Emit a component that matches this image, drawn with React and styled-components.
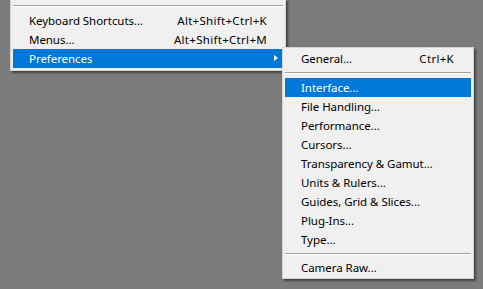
import React from 'react'
import styled, { createGlobalStyle } from 'styled-components'

const GlobalStyle = createGlobalStyle`
  html, body {
    margin: 0;
    padding: 0;
    background: #7b7b7b;
    overflow: hidden;
  }
  body {
    font-family: 'Noto Sans', 'Noto Sans CJK KR', sans-serif;
    font-size: 11.5px;
    letter-spacing: -0.05px;
    color: #000;
  }
`

const Page = styled.div`
  width: 483px;
  height: 289px;
  padding-left: 10px;
  box-sizing: border-box;
`

const Menu = styled.div`
  position: ${p => (p.$sub ? 'absolute' : 'relative')};
  box-sizing: border-box;
  width: ${p => p.$width}px;
  margin-top: ${p => (p.$sub ? 0 : -1)}px;
  padding: ${p => (p.$sub ? '1px 2px 1px' : '2px 2px')};
  background: #f0f0f0;
  border: 1px solid #d4d4d4;
  box-shadow: 2px 2px 2px rgba(0, 0, 0, 0.45);
  ${p => p.$sub && 'left: calc(100% - 1px); top: -2px; z-index: 2;'}
`

const Item = styled.div`
  position: relative;
  display: flex;
  align-items: center;
  height: 19px;
  padding: 0 ${p => p.$padRight || 16}px 0 16px;
  background: ${p => (p.$active ? '#0078d7' : 'transparent')};
  color: ${p => (p.$active ? '#fff' : '#000')};
  white-space: nowrap;
`

const Label = styled.span`
  flex: 1;
`

const Shortcut = styled.span`
  margin-left: 20px;
  letter-spacing: 0.3px;
`

const Arrow = styled.span`
  position: absolute;
  right: 5px;
  top: 6px;
  width: 0;
  height: 0;
  border-top: 3.5px solid transparent;
  border-bottom: 3.5px solid transparent;
  border-left: 4px solid ${p => (p.$active ? '#fff' : '#000')};
`

const Separator = styled.div`
  height: 1px;
  margin: ${p => p.$top || 3}px 0 ${p => p.$bottom || 4}px;
  background: #a0a0a0;
  border-bottom: 1px solid #ffffff;
`

const prefs = [
  'Interface...',
  'File Handling...',
  'Performance...',
  'Cursors...',
  'Transparency & Gamut...',
  'Units & Rulers...',
  'Guides, Grid & Slices...',
  'Plug-Ins...',
  'Type...'
]

export default function App() {
  return (
    <Page>
      <GlobalStyle />
      <Menu $width={276}>
        <Separator />
        <Item>
          <Label>Keyboard Shortcuts...</Label>
          <Shortcut>Alt+Shift+Ctrl+K</Shortcut>
        </Item>
        <Item>
          <Label>Menus...</Label>
          <Shortcut>Alt+Shift+Ctrl+M</Shortcut>
        </Item>
        <Item $active>
          <Label>Preferences</Label>
          <Arrow $active />
          <Menu $sub $width={192}>
            <Item $padRight={17}>
              <Label>General...</Label>
              <Shortcut>Ctrl+K</Shortcut>
            </Item>
            <Separator $top={4} $bottom={4} />
            {prefs.map(name => (
              <Item key={name} $active={name === 'Interface...'}>
                <Label>{name}</Label>
              </Item>
            ))}
            <Separator $top={4} $bottom={3} />
            <Item>
              <Label>Camera Raw...</Label>
            </Item>
          </Menu>
        </Item>
      </Menu>
    </Page>
  )
}
